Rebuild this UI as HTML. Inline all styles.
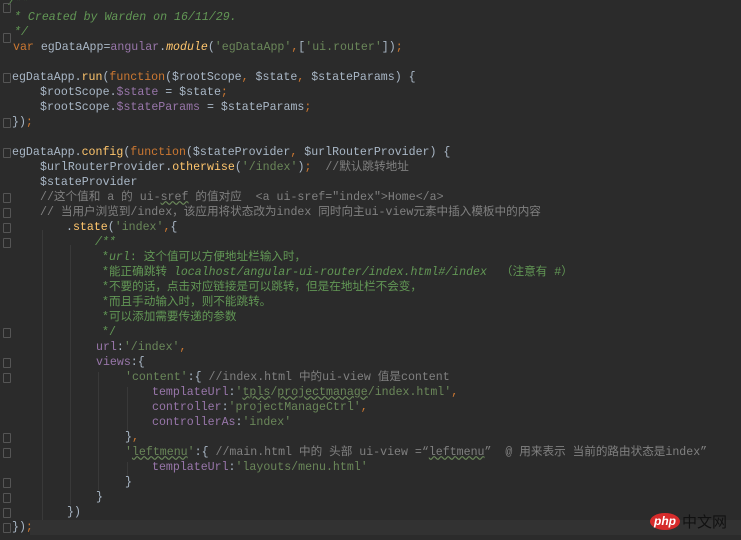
<!DOCTYPE html>
<html><head><meta charset="utf-8"><style>
body{margin:0;width:741px;height:540px;background:#2b2b2b;overflow:hidden;position:relative;font-family:"Liberation Mono","Noto Sans CJK SC",monospace;font-size:11.6px;color:#a9b7c6}
.l{position:absolute;height:15px;line-height:15px;white-space:pre;left:12px}
.k{color:#cc7832}.p{color:#9876aa}.s{color:#6a8759}.c{color:#808080}.d{color:#629755}.f{color:#ffc66d}.i{font-style:italic}
.hl{position:absolute;left:30px;right:0;top:520px;height:15px;background:#323232}
.g{position:absolute;left:3px;width:6px;height:8px;border:1px solid #555;border-radius:1px}
.u{text-decoration:underline wavy #6a8759}
.v{position:absolute;width:0;border-left:1px solid #393939}
</style></head><body>
<div class="hl"></div>
<div class="v" style="left:42px;top:230px;height:290px"></div>
<div class="v" style="left:70px;top:245px;height:260px"></div>
<div class="v" style="left:98px;top:372px;height:118px"></div>
<div class="v" style="left:127px;top:387px;height:45px"></div>
<div class="v" style="left:127px;top:462px;height:15px"></div>
<div class="l d i" style="top:-5.5px;left:8px">/**</div>
<div class="l d i" style="top:9.5px;left:14px">* Created by Warden on 16/11/29.</div>
<div class="l d i" style="top:24.5px;left:14px">*/</div>
<div class="l" style="top:39.5px;left:13px"><span class="k">var</span> egDataApp=<span class="p">angular</span>.<span class="f i">module</span>(<span class="s">'egDataApp'</span><span class="k">,</span>[<span class="s">'ui.router'</span>])<span class="k">;</span></div>
<div class="l" style="top:69.5px"><span>egDataApp.</span><span class="f">run</span>(<span class="k">function</span>($rootScope<span class="k">,</span> $state<span class="k">,</span> $stateParams) {</div>
<div class="l" style="top:84.5px;left:40px">$rootScope.<span class="p">$state</span> = $state<span class="k">;</span></div>
<div class="l" style="top:99.5px;left:40px">$rootScope.<span class="p">$stateParams</span> = $stateParams<span class="k">;</span></div>
<div class="l" style="top:114.5px">})<span class="k">;</span></div>
<div class="l" style="top:144.5px">egDataApp.<span class="f">config</span>(<span class="k">function</span>($stateProvider<span class="k">,</span> $urlRouterProvider) {</div>
<div class="l" style="top:159.5px;left:40px">$urlRouterProvider.<span class="f">otherwise</span>(<span class="s">'/index'</span>)<span class="k">;</span>  <span class="c">//默认跳转地址</span></div>
<div class="l" style="top:174.5px;left:40px">$stateProvider</div>
<div class="l c" style="top:189.5px;left:40px">//这个值和 a 的 ui-<span class="u">sref</span> 的值对应  &lt;a ui-sref="index"&gt;Home&lt;/a&gt;</div>
<div class="l c" style="top:204.5px;left:40px">// 当用户浏览到/index，该应用将状态改为index 同时向主ui-view元素中插入模板中的内容</div>
<div class="l" style="top:219.5px;left:66px">.<span class="f">state</span>(<span class="s">'index'</span><span class="k">,</span>{</div>
<div class="l d i" style="top:234.5px;left:95px">/**</div>
<div class="l d" style="top:249.5px;left:102px">*<span class="i">url</span>: 这个值可以方便地址栏输入时，</div>
<div class="l d" style="top:264.5px;left:102px">*能正确跳转 <span class="i">localhost/angular-ui-router/index.html#/index</span>  （注意有 #）</div>
<div class="l d" style="top:279.5px;left:102px">*不要的话，点击对应链接是可以跳转，但是在地址栏不会变，</div>
<div class="l d" style="top:294.5px;left:102px">*而且手动输入时，则不能跳转。</div>
<div class="l d" style="top:309.5px;left:102px">*可以添加需要传递的参数</div>
<div class="l d" style="top:324.5px;left:102px">*/</div>
<div class="l" style="top:339.5px;left:96px"><span class="p">url</span>:<span class="s">'/index'</span><span class="k">,</span></div>
<div class="l" style="top:354.5px;left:96px"><span class="p">views</span>:{</div>
<div class="l" style="top:369.5px;left:125px"><span class="s">'content'</span>:{ <span class="c">//index.html 中的ui-view 值是content</span></div>
<div class="l" style="top:384.5px;left:152px"><span class="p">templateUrl</span>:<span class="s">'<span class="u">tpls</span>/<span class="u">projectmanage</span>/index.html'</span><span class="k">,</span></div>
<div class="l" style="top:399.5px;left:152px"><span class="p">controller</span>:<span class="s">'projectManageCtrl'</span><span class="k">,</span></div>
<div class="l" style="top:414.5px;left:152px"><span class="p">controllerAs</span>:<span class="s">'index'</span></div>
<div class="l" style="top:429.5px;left:125px">}<span class="k">,</span></div>
<div class="l" style="top:444.5px;left:125px"><span class="s">'<span class="u">leftmenu</span>'</span>:{ <span class="c">//main.html 中的 头部 ui-view =“<span class="u">leftmenu</span>”  @ 用来表示 当前的路由状态是index”</span></div>
<div class="l" style="top:459.5px;left:152px"><span class="p">templateUrl</span>:<span class="s">'layouts/menu.html'</span></div>
<div class="l" style="top:474.5px;left:125px">}</div>
<div class="l" style="top:489.5px;left:96px">}</div>
<div class="l" style="top:504.5px;left:67px">})</div>
<div class="l" style="top:519.5px;left:12px">})<span class="k">;</span></div>
<div class="g" style="top:3px"></div><div class="g" style="top:33px"></div>
<div class="g" style="top:73px"></div><div class="g" style="top:118px"></div>
<div class="g" style="top:148px"></div><div class="g" style="top:193px"></div>
<div class="g" style="top:208px"></div><div class="g" style="top:223px"></div>
<div class="g" style="top:238px"></div><div class="g" style="top:328px"></div>
<div class="g" style="top:358px"></div><div class="g" style="top:373px"></div>
<div class="g" style="top:433px"></div><div class="g" style="top:448px"></div>
<div class="g" style="top:478px"></div><div class="g" style="top:493px"></div>
<div class="g" style="top:508px"></div><div class="g" style="top:523px"></div>
<div style="position:absolute;left:650px;top:513px;width:30px;height:17px;border-radius:50%;background:#d62b2b;color:#fff;font:italic bold 12px 'Liberation Sans',sans-serif;text-align:center;line-height:17px">php</div>
<div style="position:absolute;left:682px;top:512px;font:15px 'Noto Sans CJK SC',sans-serif;color:#111;line-height:19px">中文网</div>
</body></html>
